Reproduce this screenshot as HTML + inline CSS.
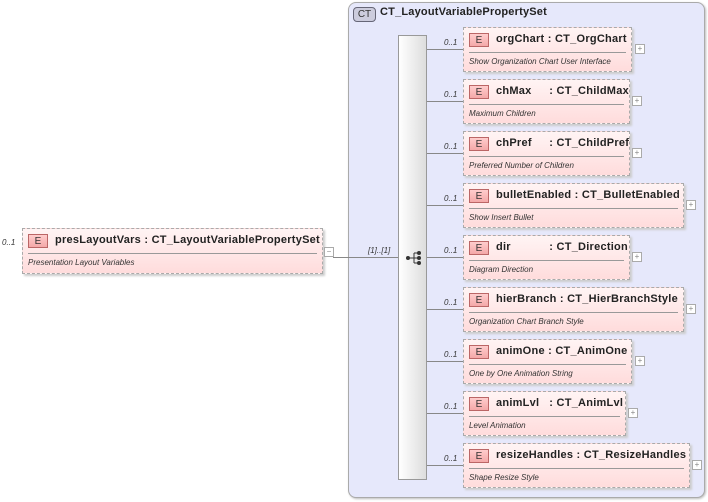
<!DOCTYPE html>
<html><head><meta charset="utf-8"><style>
body{margin:0;width:708px;height:502px;background:#fff;position:relative;overflow:hidden;font-family:"Liberation Sans",Arial,sans-serif;}
.abs{position:absolute}
.box{position:absolute;height:45px;border:1px dashed #aaa;background:linear-gradient(#fff4f4,#ffdcdc);box-shadow:2px 2px 2px #ccc;box-sizing:border-box}
.e{position:absolute;left:5px;top:5px;width:20px;height:14px;border:1px solid #b66;background:linear-gradient(#fcc,#f4a8a8);font-size:10px;text-align:center;line-height:14px;color:#333;box-sizing:border-box}
.nm{position:absolute;left:32px;top:5px;font-size:11px;font-weight:bold;color:#222;white-space:nowrap;letter-spacing:0.25px}
.nm span{display:inline-block}
.hr{position:absolute;left:5px;right:5px;top:24px;border-top:1px solid #999}
.ds{position:absolute;left:5px;top:29px;font-size:8px;font-style:italic;color:#333;white-space:nowrap}
.pl{position:absolute;width:8px;height:8px;border:1px solid #aaa;background:#fff;font-size:8px;line-height:8px;text-align:center;color:#888;box-sizing:content-box}
.ln{position:absolute;height:1px;background:#888}
.oc{position:absolute;font-size:8px;font-style:italic;color:#333}
</style></head><body>
<div class="abs" style="left:348px;top:2px;width:357px;height:496px;border:1px solid #aaa;border-radius:8px;background:#e6e8fb;box-sizing:border-box;box-shadow:1px 1px 2px #bbb"></div>
<div class="abs" style="left:353px;top:7px;width:21px;height:13px;border:1px solid #667;border-radius:4px;background:#ccd;font-size:10px;line-height:13px;text-align:center;color:#333">CT</div>
<div class="abs" style="left:380px;top:6px;font-size:11px;font-weight:bold;color:#222;letter-spacing:0.2px">CT_LayoutVariablePropertySet</div>
<div class="abs" style="left:398px;top:35px;width:29px;height:445px;border:1px solid #999;background:linear-gradient(90deg,#fff,#ddd);box-sizing:border-box"></div>
<svg class="abs" style="left:405px;top:250px" width="18" height="16"><line x1="2" y1="8" x2="9" y2="8" stroke="#333"/><circle cx="3" cy="8" r="2" fill="#333"/><path d="M9 3V13M9 3H13M9 8H13M9 13H13" stroke="#333" fill="none"/><circle cx="14" cy="3" r="2" fill="#333"/><circle cx="14" cy="8" r="2" fill="#333"/><circle cx="14" cy="13" r="2" fill="#333"/></svg>
<div class="ln" style="left:333px;top:257px;width:65px"></div>
<div class="oc" style="left:368px;top:246px">[1]..[1]</div>

<div class="oc" style="left:2px;top:238px">0..1</div>
<div class="box" style="left:22px;top:228px;width:301px;height:46px"><div class="e">E</div><div class="nm">presLayoutVars : CT_LayoutVariablePropertySet</div><div class="hr"></div><div class="ds">Presentation Layout Variables</div></div>
<div class="pl" style="left:324px;top:247px">−</div>

<div class="ln" style="left:427px;top:49px;width:36px"></div><div class="oc" style="left:444px;top:38px">0..1</div>
<div class="box" style="left:463px;top:27px;width:169px"><div class="e">E</div><div class="nm"><span>orgChart</span> : CT_OrgChart</div><div class="hr"></div><div class="ds">Show Organization Chart User Interface</div></div><div class="pl" style="left:635px;top:44px">+</div>

<div class="ln" style="left:427px;top:101px;width:36px"></div><div class="oc" style="left:444px;top:90px">0..1</div>
<div class="box" style="left:463px;top:79px;width:167px"><div class="e">E</div><div class="nm"><span style="width:50px">chMax</span> : CT_ChildMax</div><div class="hr"></div><div class="ds">Maximum Children</div></div><div class="pl" style="left:632px;top:96px">+</div>

<div class="ln" style="left:427px;top:153px;width:36px"></div><div class="oc" style="left:444px;top:142px">0..1</div>
<div class="box" style="left:463px;top:131px;width:167px"><div class="e">E</div><div class="nm"><span style="width:50px">chPref</span> : CT_ChildPref</div><div class="hr"></div><div class="ds">Preferred Number of Children</div></div><div class="pl" style="left:632px;top:148px">+</div>

<div class="ln" style="left:427px;top:205px;width:36px"></div><div class="oc" style="left:444px;top:194px">0..1</div>
<div class="box" style="left:463px;top:183px;width:221px"><div class="e">E</div><div class="nm">bulletEnabled : CT_BulletEnabled</div><div class="hr"></div><div class="ds">Show Insert Bullet</div></div><div class="pl" style="left:686px;top:200px">+</div>

<div class="ln" style="left:427px;top:257px;width:36px"></div><div class="oc" style="left:444px;top:246px">0..1</div>
<div class="box" style="left:463px;top:235px;width:167px"><div class="e">E</div><div class="nm"><span style="width:50px">dir</span> : CT_Direction</div><div class="hr"></div><div class="ds">Diagram Direction</div></div><div class="pl" style="left:632px;top:252px">+</div>

<div class="ln" style="left:427px;top:309px;width:36px"></div><div class="oc" style="left:444px;top:298px">0..1</div>
<div class="box" style="left:463px;top:287px;width:221px"><div class="e">E</div><div class="nm">hierBranch : CT_HierBranchStyle</div><div class="hr"></div><div class="ds">Organization Chart Branch Style</div></div><div class="pl" style="left:686px;top:304px">+</div>

<div class="ln" style="left:427px;top:361px;width:36px"></div><div class="oc" style="left:444px;top:350px">0..1</div>
<div class="box" style="left:463px;top:339px;width:169px"><div class="e">E</div><div class="nm">animOne : CT_AnimOne</div><div class="hr"></div><div class="ds">One by One Animation String</div></div><div class="pl" style="left:635px;top:356px">+</div>

<div class="ln" style="left:427px;top:413px;width:36px"></div><div class="oc" style="left:444px;top:402px">0..1</div>
<div class="box" style="left:463px;top:391px;width:163px"><div class="e">E</div><div class="nm"><span style="width:50px">animLvl</span> : CT_AnimLvl</div><div class="hr"></div><div class="ds">Level Animation</div></div><div class="pl" style="left:628px;top:408px">+</div>

<div class="ln" style="left:427px;top:465px;width:36px"></div><div class="oc" style="left:444px;top:454px">0..1</div>
<div class="box" style="left:463px;top:443px;width:227px"><div class="e">E</div><div class="nm">resizeHandles : CT_ResizeHandles</div><div class="hr"></div><div class="ds">Shape Resize Style</div></div><div class="pl" style="left:692px;top:460px">+</div>
</body></html>
